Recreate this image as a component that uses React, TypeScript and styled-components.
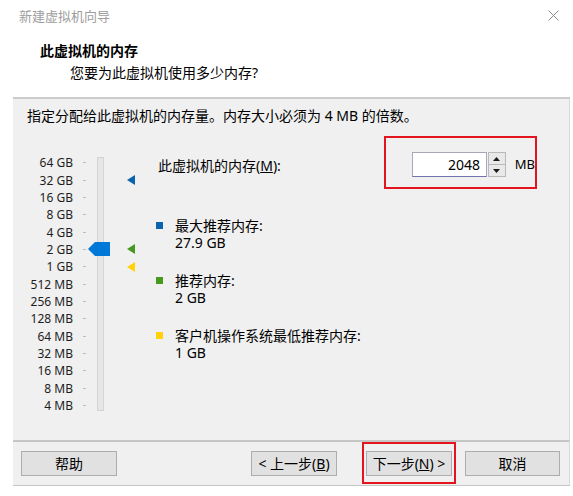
import React from 'react';
import styled, { createGlobalStyle } from 'styled-components';

const FONT = `"Noto Sans", "Noto Sans CJK SC", sans-serif`;
const ROW = 17.36;

const GlobalStyle = createGlobalStyle`
  html, body {
    margin: 0;
    padding: 0;
    background: #ffffff;
  }
  body {
    font-family: ${FONT};
    color: #000;
  }
  * {
    box-sizing: border-box;
  }
`;

const Window = styled.div`
  width: 573px;
  height: 496px;
  background: #fff;
  overflow: hidden;
  display: flex;
  flex-direction: column;
`;

const TitleBar = styled.div`
  height: 30px;
  flex: none;
  display: flex;
  align-items: center;
  justify-content: space-between;
  padding: 0 14px 0 19px;
`;

const TitleText = styled.span`
  font-size: 13px;
  color: #9d9d9d;
`;

const Dialog = styled.div`
  margin-left: 13px;
  width: 557px;
  display: flex;
  flex-direction: column;
`;

const Header = styled.div`
  height: 69px;
  padding: 10px 0 0 27px;
  border-bottom: 2px solid #cbcbcb;
`;

const HeaderTitle = styled.div`
  font-size: 14px;
  font-weight: 700;
  line-height: 21px;
`;

const HeaderSub = styled.div`
  font-size: 14px;
  line-height: 21px;
  margin-top: 1px;
  padding-left: 30px;
`;

const Body = styled.div`
  height: 341px;
  background: #f0f0f0;
  border-right: 1px solid #d9d9d9;
  padding: 7px 0 0 14px;
`;

const Instruction = styled.div`
  font-size: 14px;
  line-height: 20px;
`;

const Main = styled.div`
  display: flex;
  align-items: flex-start;
  margin: 10px 0 0 -14px;
`;

const SliderWrap = styled.div`
  width: 143px;
  flex: none;
  display: flex;
  margin-top: 18px;
`;

const Column = styled.div<{ $width: number; $offset?: number }>`
  width: ${(p) => p.$width}px;
  margin-left: ${(p) => p.$offset ?? 0}px;
  display: flex;
  flex-direction: column;
  flex: none;
`;

const ScaleRow = styled.div`
  height: ${ROW}px;
  display: flex;
  align-items: center;
  justify-content: flex-end;
  font-size: 12px;
  color: #1e1e1e;
  white-space: nowrap;
`;

const Tick = styled.span`
  width: 3px;
  height: 1px;
  background: #bdbdbd;
  margin-left: 10px;
`;

const TrackColumn = styled(Column)`
  position: relative;

  &::before {
    content: '';
    position: absolute;
    left: 9px;
    top: 3px;
    bottom: 3px;
    width: 5px;
    background: #e6e6e6;
    border: 1px solid #d4d4d4;
  }
`;

const SlotRow = styled.div`
  height: ${ROW}px;
  display: flex;
  align-items: center;
`;

const Thumb = styled.svg`
  position: relative;
  display: block;
`;

const RightCol = styled.div`
  flex: 1;
  display: flex;
  flex-direction: column;
`;

const TopRow = styled.div`
  display: flex;
  align-items: center;
`;

const MemLabel = styled.span`
  font-size: 14px;
  margin: 4px 0 0 2px;
`;

const RedBox = styled.div`
  width: 153px;
  height: 53px;
  margin-left: auto;
  margin-right: 32px;
  border: 2px solid #e3141d;
  padding: 14px 0 0 26px;
  display: flex;
  align-items: flex-start;
`;

const NumberField = styled.div`
  width: 76px;
  height: 25px;
  background: #fff;
  border: 1px solid #a8a8b8;
  border-bottom-color: #7373ad;
  font-size: 14px;
  line-height: 23px;
  text-align: right;
  padding-right: 6px;
`;

const Spinner = styled.div`
  width: 18px;
  height: 25px;
  display: flex;
  flex-direction: column;
  margin-left: 1px;
`;

const SpinButton = styled.div`
  flex: 1;
  background: #e9e9e9;
  border: 1px solid #b9b9b9;
  display: flex;
  align-items: center;
  justify-content: center;

  & + & {
    border-top: none;
  }
`;

const Unit = styled.span`
  font-size: 13px;
  line-height: 25px;
  margin-left: 9px;
`;

const Legend = styled.div`
  display: flex;
  flex-direction: column;
  gap: 21px;
  margin-top: 28px;
`;

const LegendItem = styled.div`
  display: flex;
  align-items: flex-start;
`;

const Swatch = styled.span<{ $color: string }>`
  width: 7px;
  height: 7px;
  margin: 5px 12px 0 0;
  background: ${(p) => p.$color};
  flex: none;
`;

const LegendText = styled.div`
  font-size: 14px;
  line-height: 17px;
`;

const Footer = styled.div`
  height: 46px;
  background: #f0f0f0;
  border-top: 2px solid #c6c6c6;
  border-bottom: 1px solid #c4c4c4;
  border-right: 1px solid #d9d9d9;
  padding: 9px 9px 0 8px;
  display: flex;
  align-items: flex-start;
`;

const Button = styled.div<{ $width: number; $gap?: number; $auto?: boolean }>`
  width: ${(p) => p.$width}px;
  height: 25px;
  margin-left: ${(p) => (p.$auto ? 'auto' : `${p.$gap ?? 0}px`)};
  background: #e1e1e1;
  border: 1px solid #adadad;
  font-size: 14px;
  line-height: 23px;
  text-align: center;
  white-space: nowrap;
  flex: none;
`;

const Highlight = styled.div<{ $gap: number }>`
  margin: -9px -4px -8px ${(p) => p.$gap - 4}px;
  padding: 7px 2px 6px 2px;
  border: 2px solid #e3141d;
  flex: none;
`;

const scale = [
  '64 GB', '32 GB', '16 GB', '8 GB', '4 GB', '2 GB', '1 GB',
  '512 MB', '256 MB', '128 MB', '64 MB', '32 MB', '16 MB', '8 MB', '4 MB',
];

const markers: Record<number, string> = {
  1: '#0b63b0',
  5: '#46991d',
  6: '#ffd20a',
};

const thumbIndex = 5;

const legend = [
  { color: '#0b63b0', label: '最大推荐内存:', value: '27.9 GB' },
  { color: '#46991d', label: '推荐内存:', value: '2 GB' },
  { color: '#ffd20a', label: '客户机操作系统最低推荐内存:', value: '1 GB' },
];

const Arrow: React.FC<{ up?: boolean }> = ({ up }) => (
  <svg width="7" height="4" viewBox="0 0 7 4">
    <polygon points={up ? '0,4 3.5,0 7,4' : '0,0 3.5,4 7,0'} fill="#1a1a1a" />
  </svg>
);

const App: React.FC = () => {
  return (
    <>
      <GlobalStyle />
      <Window>
        <TitleBar>
          <TitleText>新建虚拟机向导</TitleText>
          <svg width="11" height="11" viewBox="0 0 11 11">
            <path d="M0.5 0.5 L10.5 10.5 M10.5 0.5 L0.5 10.5" stroke="#8c8c8c" strokeWidth="1" />
          </svg>
        </TitleBar>
        <Dialog>
          <Header>
            <HeaderTitle>此虚拟机的内存</HeaderTitle>
            <HeaderSub>您要为此虚拟机使用多少内存?</HeaderSub>
          </Header>
          <Body>
            <Instruction>指定分配给此虚拟机的内存量。内存大小必须为 4 MB 的倍数。</Instruction>
            <Main>
              <SliderWrap>
                <Column $width={73}>
                  {scale.map((s) => (
                    <ScaleRow key={s}>
                      {s}
                      <Tick />
                    </ScaleRow>
                  ))}
                </Column>
                <TrackColumn $width={22} $offset={2}>
                  {scale.map((s, i) => (
                    <SlotRow key={s}>
                      {i === thumbIndex && (
                        <Thumb width="22" height="14" viewBox="0 0 22 14">
                          <polygon points="0,7 7,0 22,0 22,14 7,14" fill="#0078d7" />
                        </Thumb>
                      )}
                    </SlotRow>
                  ))}
                </TrackColumn>
                <Column $width={8} $offset={17}>
                  {scale.map((s, i) => (
                    <SlotRow key={s}>
                      {markers[i] && (
                        <svg width="8" height="10" viewBox="0 0 8 10">
                          <polygon points="0,5 8,0 8,10" fill={markers[i]} />
                        </svg>
                      )}
                    </SlotRow>
                  ))}
                </Column>
              </SliderWrap>
              <RightCol>
                <TopRow>
                  <MemLabel>
                    此虚拟机的内存(<u>M</u>):
                  </MemLabel>
                  <RedBox>
                    <NumberField>2048</NumberField>
                    <Spinner>
                      <SpinButton>
                        <Arrow up />
                      </SpinButton>
                      <SpinButton>
                        <Arrow />
                      </SpinButton>
                    </Spinner>
                    <Unit>MB</Unit>
                  </RedBox>
                </TopRow>
                <Legend>
                  {legend.map((item) => (
                    <LegendItem key={item.label}>
                      <Swatch $color={item.color} />
                      <LegendText>
                        <div>{item.label}</div>
                        <div>{item.value}</div>
                      </LegendText>
                    </LegendItem>
                  ))}
                </Legend>
              </RightCol>
            </Main>
          </Body>
          <Footer>
            <Button $width={96}>帮助</Button>
            <Button $width={86} $auto>
              &lt; 上一步(<u>B</u>)
            </Button>
            <Highlight $gap={29}>
              <Button $width={86}>
                下一步(<u>N</u>) &gt;
              </Button>
            </Highlight>
            <Button $width={95} $gap={13}>
              取消
            </Button>
          </Footer>
        </Dialog>
      </Window>
    </>
  );
};

export default App;
